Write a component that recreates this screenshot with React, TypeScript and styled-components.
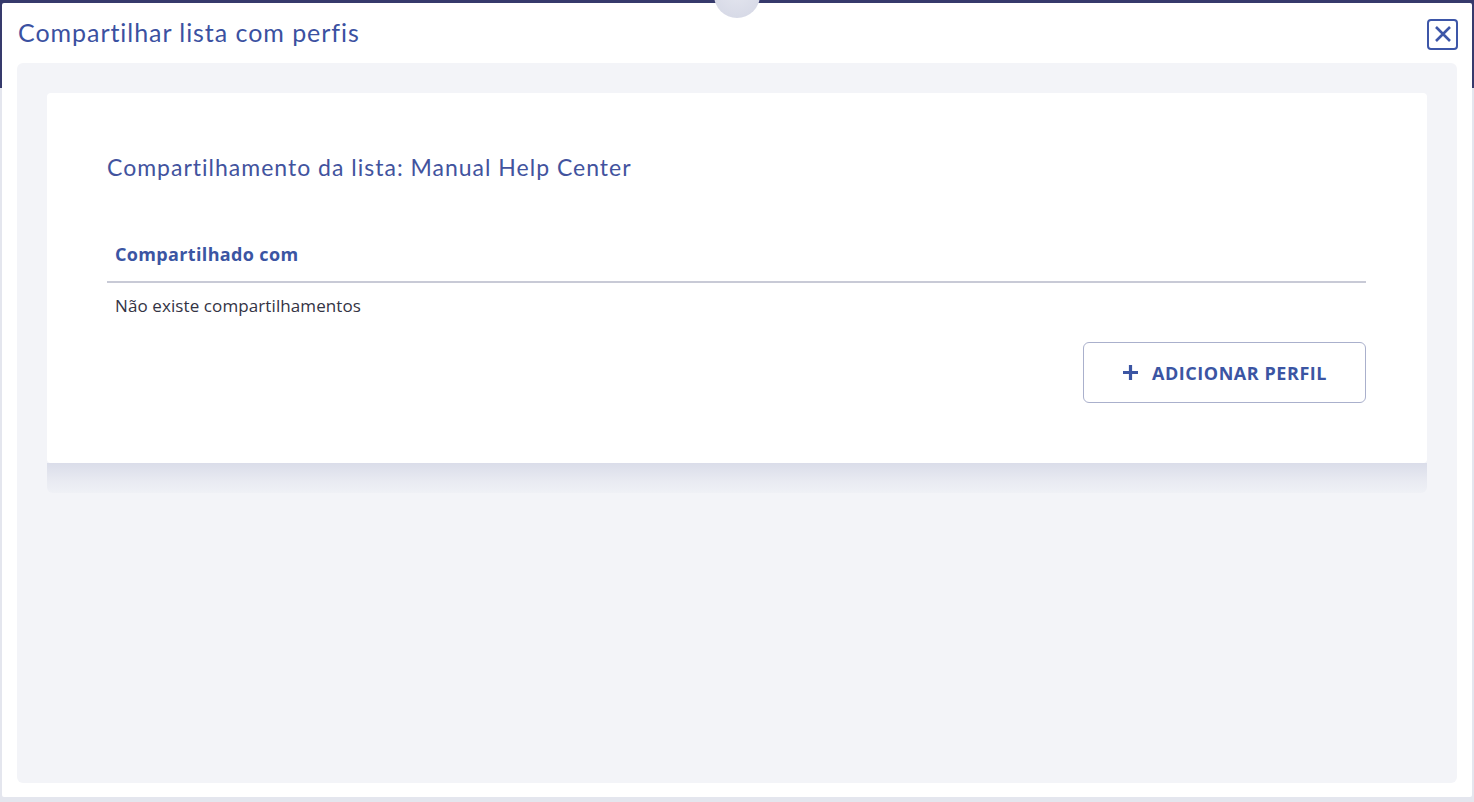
import React from "react";
import styled, { createGlobalStyle } from "styled-components";

const GlobalStyle = createGlobalStyle`
  html, body {
    margin: 0;
    padding: 0;
    width: 1474px;
    height: 802px;
    overflow: hidden;
  }
  body {
    font-family: "Open Sans", "Liberation Sans", sans-serif;
  }
  * {
    box-sizing: border-box;
  }
`;

const Page = styled.div`
  position: relative;
  width: 1474px;
  height: 802px;
  display: flex;
  flex-direction: column;
  background-color: #e4e6ee;
`;

const TopBar = styled.div`
  height: 88px;
  background-color: #363a6c;
`;

const Avatar = styled.div`
  position: absolute;
  top: -28px;
  left: 714px;
  width: 46px;
  height: 46px;
  border-radius: 50%;
  background: radial-gradient(circle at 50% 40%, #e4e6ef, #d3d6e4);
  z-index: 3;
`;

const Modal = styled.div`
  position: absolute;
  top: 3px;
  left: 2px;
  right: 2px;
  bottom: 5px;
  display: flex;
  flex-direction: column;
  background-color: #ffffff;
  border-radius: 2px;
  z-index: 2;
`;

const ModalHeader = styled.div`
  height: 60px;
  display: flex;
  align-items: center;
  justify-content: space-between;
  padding: 0 14px 0 16px;
`;

const ModalTitle = styled.h1`
  margin: 0 0 2px 0;
  font-family: "Lato", "Open Sans", sans-serif;
  font-weight: 400;
  font-size: 25px;
  color: #3b51a1;
  letter-spacing: 0.95px;
`;

const CloseButton = styled.button`
  width: 31px;
  height: 31px;
  display: flex;
  align-items: center;
  justify-content: center;
  padding: 0;
  background: #ffffff;
  border: 2px solid #3d56a8;
  border-radius: 4px;
  color: #3d56a8;
  cursor: pointer;
  margin-top: 2px;
`;

const ModalBody = styled.div`
  flex: 1;
  margin: 0 15px 14px 15px;
  padding: 30px 30px 30px 30px;
  background-color: #f3f4f8;
  border-radius: 6px;
`;

const Card = styled.div`
  position: relative;
  background-color: #ffffff;
  border-radius: 4px;
  padding: 56px 61px 60px 60px;

  &::after {
    content: "";
    position: absolute;
    top: 100%;
    left: 0;
    right: 0;
    height: 30px;
    border-radius: 0 0 6px 6px;
    background: linear-gradient(
      to bottom,
      rgba(170, 176, 205, 0.34),
      rgba(170, 176, 205, 0.14) 60%,
      rgba(170, 176, 205, 0.05)
    );
  }
`;

const Subtitle = styled.h2`
  margin: 0;
  font-family: "Lato", "Open Sans", sans-serif;
  font-weight: 400;
  font-size: 23px;
  line-height: 36px;
  letter-spacing: 1px;
  color: #42539e;
`;

const Table = styled.div`
  margin-top: 42px;
  display: flex;
  flex-direction: column;
`;

const HeadCell = styled.div`
  padding: 0 8px;
  height: 56px;
  display: flex;
  align-items: center;
  font-weight: 700;
  font-size: 18px;
  letter-spacing: 0.35px;
  color: #3b55a3;
  border-bottom: 2px solid #c8cad6;
`;

const BodyCell = styled.div`
  padding: 0 8px;
  height: 44px;
  display: flex;
  align-items: center;
  font-size: 17px;
  letter-spacing: 0.1px;
  color: #333344;
`;

const Actions = styled.div`
  display: flex;
  justify-content: flex-end;
  margin-top: 15px;
`;

const AddButton = styled.button`
  width: 283px;
  height: 61px;
  display: flex;
  align-items: center;
  justify-content: center;
  gap: 13px;
  padding: 0;
  background-color: #ffffff;
  border: 1px solid #aab0cc;
  border-radius: 6px;
  font-family: "Open Sans", "Liberation Sans", sans-serif;
  font-weight: 700;
  font-size: 18px;
  letter-spacing: 0.55px;
  color: #3b55a3;
  cursor: pointer;
`;

const App: React.FC = () => {
  return (
    <Page>
      <GlobalStyle />
      <TopBar />
      <Avatar />
      <Modal>
        <ModalHeader>
          <ModalTitle>Compartilhar lista com perfis</ModalTitle>
          <CloseButton aria-label="Fechar">
            <svg width="18" height="18" viewBox="0 0 18 18">
              <path d="M2 2 L16 16 M16 2 L2 16" stroke="currentColor" strokeWidth="2.6" />
            </svg>
          </CloseButton>
        </ModalHeader>
        <ModalBody>
          <Card>
            <Subtitle>Compartilhamento da lista: Manual Help Center</Subtitle>
            <Table>
              <HeadCell>Compartilhado com</HeadCell>
              <BodyCell>Não existe compartilhamentos</BodyCell>
            </Table>
            <Actions>
              <AddButton>
                <svg width="17" height="17" viewBox="0 0 17 17">
                  <path d="M8.5 1 V16 M1 8.5 H16" stroke="currentColor" strokeWidth="3.2" />
                </svg>
                ADICIONAR PERFIL
              </AddButton>
            </Actions>
          </Card>
        </ModalBody>
      </Modal>
    </Page>
  );
};

export default App;
